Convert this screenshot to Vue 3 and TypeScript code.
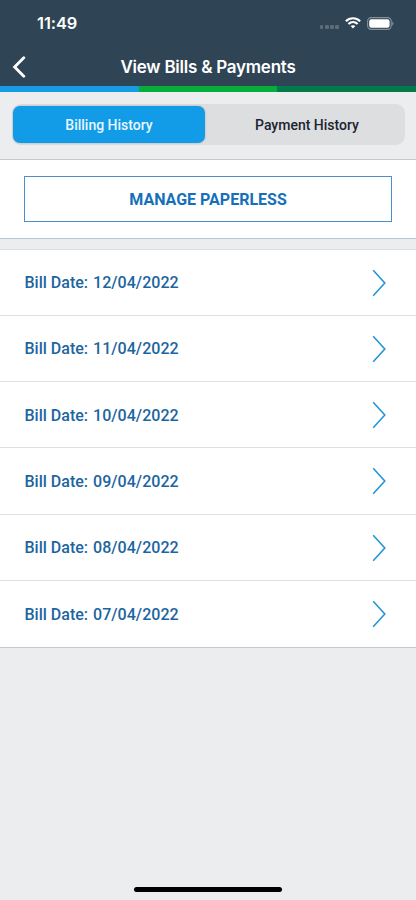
<script setup lang="ts">
interface Bill {
  date: string
}

const bills: Bill[] = [
  { date: '12/04/2022' },
  { date: '11/04/2022' },
  { date: '10/04/2022' },
  { date: '09/04/2022' },
  { date: '08/04/2022' },
  { date: '07/04/2022' },
]
</script>

<template>
  <div class="screen">
    <header class="header">
      <div class="status">
        <span class="time">11:49</span>
        <div class="indicators">
          <div class="signal"><i v-for="n in 4" :key="n"></i></div>
          <svg class="wifi" width="16" height="12" viewBox="0 0 16 12" fill="none" stroke="#fff" stroke-width="2.1">
            <path d="M.9 4.2C4.9.2 11.1.2 15.1 4.2" />
            <path d="M3.4 7.1c2.7-2.6 6.5-2.6 9.2 0" />
            <path d="M5.6 9.1c1.4-1.3 3.4-1.3 4.8 0L8 11.6z" fill="#fff" stroke="none" />
          </svg>
          <svg class="battery" width="27" height="13" viewBox="0 0 27 13">
            <rect x=".6" y=".6" width="23.6" height="11.8" rx="3.6" fill="none" stroke="#84919b" stroke-width="1.1" />
            <rect x="2.2" y="2.2" width="20.4" height="8.6" rx="2.2" fill="#fff" />
            <path d="M25.2 4.4c1.7.6 1.7 3.6 0 4.2z" fill="#84919b" />
          </svg>
        </div>
      </div>
      <nav class="navbar">
        <button class="back" aria-label="Back">
          <svg width="14" height="22" viewBox="0 0 14 22" fill="none" stroke="#fff" stroke-width="2.8" stroke-linecap="round" stroke-linejoin="miter">
            <path d="M11.8 1.8 2.6 11l9.2 9.2" />
          </svg>
        </button>
        <h1 class="title">View Bills &amp; Payments</h1>
      </nav>
    </header>
    <div class="stripe"><i class="blue"></i><i class="green"></i><i class="dark"></i></div>

    <div class="tabs">
      <div class="segmented">
        <button class="segment active">Billing History</button>
        <button class="segment inactive">Payment History</button>
      </div>
    </div>

    <section class="actions">
      <button class="paperless">MANAGE PAPERLESS</button>
    </section>

    <ul class="bills">
      <li v-for="bill in bills" :key="bill.date" class="bill">
        <span class="label">Bill Date: <span class="date">{{ bill.date }}</span></span>
        <svg class="chevron" width="14" height="28" viewBox="0 0 14 28" fill="none" stroke="#2496d6" stroke-width="1.6">
          <path d="M1.2 1.2 12.8 14 1.2 26.8" />
        </svg>
      </li>
    </ul>

    <footer class="home"><i></i></footer>
  </div>
</template>

<style>
body {
  margin: 0;
  background: #ecedef;
}
</style>

<style scoped>
.screen {
  box-sizing: border-box;
  display: flex;
  flex-direction: column;
  height: 900px;
  background: #ecedef;
  font-family: Roboto, sans-serif;
}
button {
  padding: 0;
  border: 0;
  background: none;
  font-family: inherit;
}
.header {
  height: 85.5px;
  background: #2f4556;
  color: #fff;
}
.status {
  display: flex;
  justify-content: space-between;
  align-items: center;
  height: 46px;
  padding: 0 22px 0 37px;
}
.time {
  font: 600 16.4px/20px Inter, sans-serif;
  letter-spacing: -0.05px;
}
.indicators {
  display: flex;
  align-items: center;
}
.signal {
  display: flex;
  gap: 1.6px;
  margin: 8px 6px 0 0;
}
.signal i {
  width: 3.6px;
  height: 3.6px;
  border-radius: 1.2px;
  background: #5d6d7a;
}
.wifi {
  margin-right: 6px;
}
.navbar {
  display: grid;
  grid-template-columns: 40px 1fr 40px;
  align-items: center;
  height: 41px;
}
.back {
  display: flex;
  padding-left: 12px;
}
.title {
  margin: 0;
  font: 600 17px/22px Inter, sans-serif;
  letter-spacing: -0.24px;
  text-align: center;
  white-space: nowrap;
}
.stripe {
  display: grid;
  grid-template-columns: 138.5px 138.5px 1fr;
  height: 6px;
}
.blue {
  background: #169be5;
}
.green {
  background: #06ad3c;
}
.dark {
  background: #04794a;
}
.tabs {
  box-sizing: border-box;
  height: 68.5px;
  padding: 12.5px 11px 0 12px;
  border-bottom: 1px solid #c5cad1;
}
.segmented {
  box-sizing: border-box;
  display: grid;
  grid-template-columns: 192px 1fr;
  height: 41px;
  padding: 2px 1px;
  border-radius: 9px;
  background: #dddee0;
}
.segment {
  border-radius: 7px;
  color: #1b2530;
  font-size: 14px;
  font-weight: 500;
}
.active {
  background: #129ce8;
  color: #e9f7ff;
  box-shadow: 0 0 2px rgba(0, 60, 100, 0.3);
}
.inactive {
  padding-left: 5px;
}
.actions {
  box-sizing: border-box;
  height: 79px;
  padding: 15.5px 24px 0;
  border-bottom: 1px solid #b9c5d1;
  background: #fff;
}
.paperless {
  box-sizing: border-box;
  width: 100%;
  height: 46px;
  padding-top: 1px;
  border: 1.5px solid #4c8fcb;
  color: #1670b9;
  font-size: 16px;
  font-weight: 700;
}
.bills {
  margin: 9.5px 0 0;
  padding: 0;
  border-top: 1px solid #dcdee1;
  border-bottom: 1px solid #c6cad0;
  background: #fff;
  list-style: none;
}
.bill {
  box-sizing: border-box;
  display: flex;
  justify-content: space-between;
  align-items: center;
  height: 66.25px;
  padding: 1px 30px 0 24.5px;
  border-bottom: 1px solid #dedfe1;
}
.bill:last-child {
  height: 66px;
  border-bottom: 0;
}
.label {
  color: #1c659f;
  font-size: 16px;
  font-weight: 500;
}
.date {
  margin-left: 1px;
  letter-spacing: 0.05px;
}
.home {
  display: flex;
  justify-content: center;
  margin-top: auto;
  padding-bottom: 8.5px;
}
.home i {
  width: 148px;
  height: 5px;
  border-radius: 3px;
  background: #000;
}
</style>
